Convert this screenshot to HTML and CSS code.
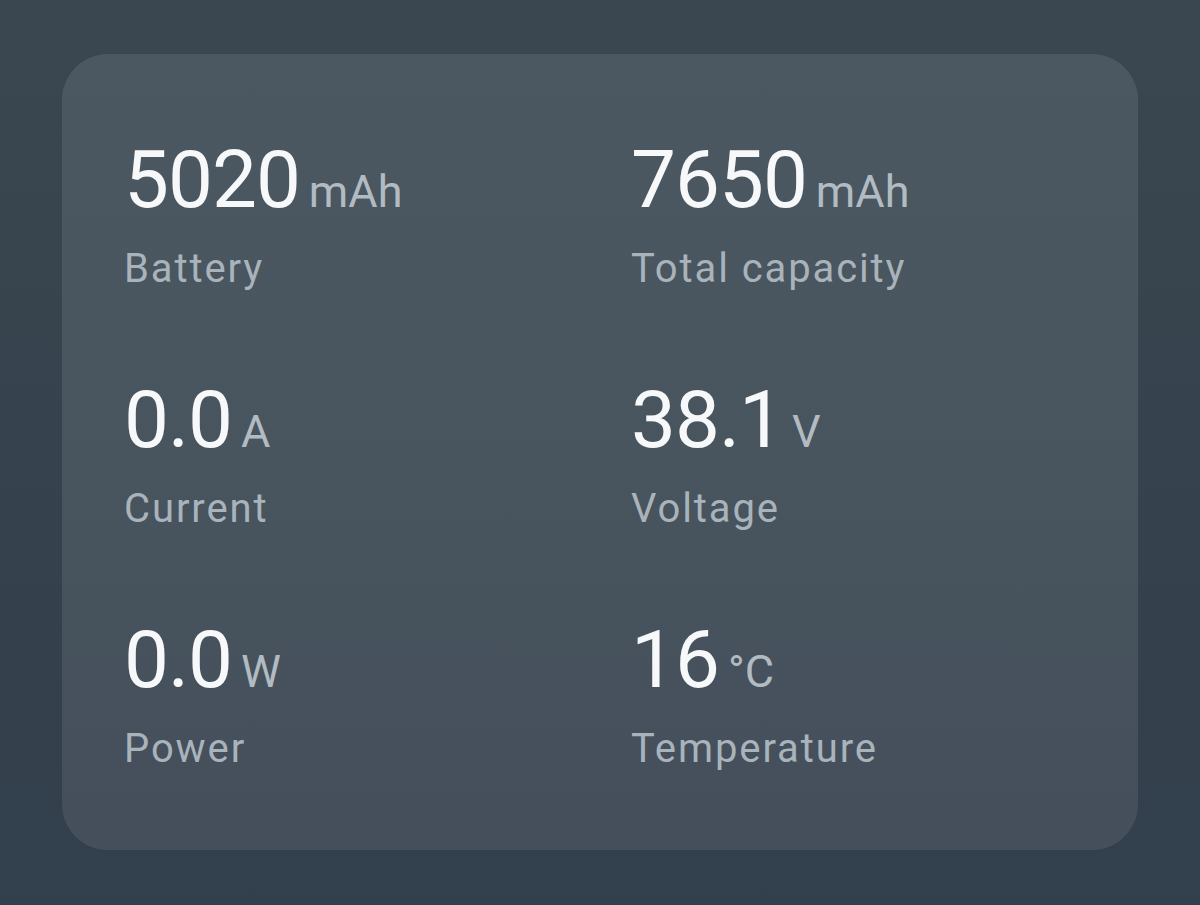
FILE: index.html
```html
<!DOCTYPE html>
<html lang="en">
<head>
<meta charset="utf-8">
<title>Battery stats</title>
<link rel="stylesheet" href="styles.css">
</head>
<body>
<main class="screen">
  <section class="card">
    <div class="stat">
      <div class="value"><span class="num">5020</span><span class="unit">mAh</span></div>
      <div class="label">Battery</div>
    </div>
    <div class="stat">
      <div class="value"><span class="num">7650</span><span class="unit">mAh</span></div>
      <div class="label">Total capacity</div>
    </div>
    <div class="stat">
      <div class="value"><span class="num">0.0</span><span class="unit">A</span></div>
      <div class="label">Current</div>
    </div>
    <div class="stat">
      <div class="value"><span class="num">38.1</span><span class="unit">V</span></div>
      <div class="label">Voltage</div>
    </div>
    <div class="stat">
      <div class="value"><span class="num">0.0</span><span class="unit">W</span></div>
      <div class="label">Power</div>
    </div>
    <div class="stat">
      <div class="value"><span class="num">16</span><span class="unit">°C</span></div>
      <div class="label">Temperature</div>
    </div>
  </section>
</main>
</body>
</html>
```
FILE: styles.css
```css
* { box-sizing: border-box; }
html, body {
  margin: 0;
  padding: 0;
}
body {
  width: 1200px;
  height: 905px;
  overflow: hidden;
  background: linear-gradient(180deg, #3a4750 0%, #36434e 50%, #323f4c 100%);
  font-family: Roboto, "Open Sans", "Liberation Sans", sans-serif;
}
.screen {
  padding: 54px 62px 0 62px;
}
.card {
  width: 1076px;
  height: 796px;
  border-radius: 46px;
  background: linear-gradient(180deg, #4c5861 0%, #48545e 50%, #444f5b 100%);
  display: grid;
  grid-template-columns: 507px 1fr;
  grid-auto-rows: 240px;
  padding: 95px 0 0 62px;
}
.stat {
  display: flex;
  flex-direction: column;
}
.value {
  display: flex;
  align-items: baseline;
  gap: 9px;
  height: 62px;
  line-height: 62px;
}
.num {
  font-size: 80px;
  color: #f6f8f9;
  letter-spacing: -1px;
}
.unit {
  font-size: 45px;
  color: #b2bbc2;
}
.label {
  margin-top: 38px;
  font-size: 40px;
  line-height: 40px;
  color: #a8b3bb;
  letter-spacing: 1.9px;
}
```
